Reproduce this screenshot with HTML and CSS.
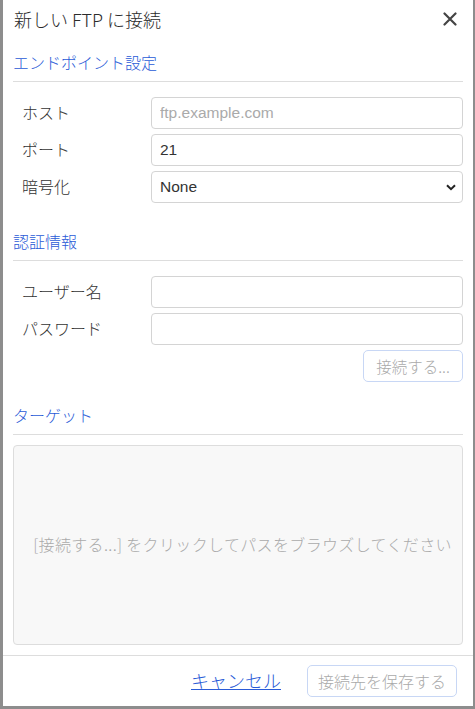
FILE: index.html
```html
<!DOCTYPE html>
<html lang="ja">
<head>
<meta charset="utf-8">
<link rel="stylesheet" href="styles.css">
</head>
<body>
<div class="dialog">
  <div class="header">
    <div class="title">新しい FTP に接続</div>
    <button class="close" aria-label="close">
      <svg width="14" height="14" viewBox="0 0 14 14"><path d="M1.5 1.5 L12.5 12.5 M12.5 1.5 L1.5 12.5" stroke="#444" stroke-width="2.2" stroke-linecap="round"/></svg>
    </button>
  </div>
  <div class="body">
    <div class="section-title">エンドポイント設定</div>
    <div class="rows">
      <div class="row"><label>ホスト</label><input class="field" placeholder="ftp.example.com"></div>
      <div class="row"><label>ポート</label><input class="field" value="21"></div>
      <div class="row"><label>暗号化</label>
        <div class="field select"><span>None</span>
          <svg width="10" height="7" viewBox="0 0 10 7"><path d="M1 1.2 L5 5.2 L9 1.2" fill="none" stroke="#222" stroke-width="2"/></svg>
        </div>
      </div>
    </div>
    <div class="section-title second">認証情報</div>
    <div class="rows">
      <div class="row"><label>ユーザー名</label><input class="field"></div>
      <div class="row"><label>パスワード</label><input class="field" type="password"></div>
      <div class="row right"><button class="btn" disabled>接続する...</button></div>
    </div>
    <div class="section-title third">ターゲット</div>
    <div class="target">[接続する...] をクリックしてパスをブラウズしてください</div>
  </div>
  <div class="footer">
    <a class="cancel" href="#">キャンセル</a>
    <button class="btn save" disabled>接続先を保存する</button>
  </div>
</div>
</body>
</html>
```
FILE: styles.css
```css
html, body {
  margin: 0;
  padding: 0;
}
body {
  background: #8d8d8d;
  height: 709px;
  overflow: hidden;
  font-family: "Liberation Sans", "Noto Sans CJK JP", sans-serif;
  font-weight: 300;
  color: #333;
}
.dialog {
  margin-left: 3px;
  width: 470px;
  height: 706px;
  background: #fff;
  display: flex;
  flex-direction: column;
}
.header {
  height: 38px;
  padding: 0 16px 0 11px;
  display: flex;
  align-items: center;
  justify-content: space-between;
}
.title {
  font-family: "Noto Sans CJK JP", sans-serif;
  font-size: 18px;
  line-height: 24px;
  color: #2b2b2b;
}
.close {
  border: 0;
  background: none;
  padding: 0;
  width: 14px;
  height: 14px;
  display: flex;
}
.body {
  padding: 0 10px;
  flex: 1;
}
.section-title {
  margin-top: 15px;
  font-size: 16px;
  line-height: 22px;
  color: #2a5bd7;
  padding-bottom: 6px;
  border-bottom: 1px solid #ddd;
}
.section-title.second {
  margin-top: 29px;
}
.section-title.third {
  margin-top: 24px;
}
.rows {
  margin-top: 15px;
  display: flex;
  flex-direction: column;
  gap: 5px;
}
.row {
  display: flex;
  align-items: center;
  height: 32px;
}
.row.right {
  justify-content: flex-end;
}
.row label {
  width: 129px;
  padding-left: 9px;
  padding-bottom: 3px;
  font-size: 16px;
  color: #333;
}
.field {
  box-sizing: border-box;
  flex: 1;
  height: 32px;
  border: 1px solid #d4d4d4;
  border-radius: 4px;
  padding: 0 8px;
  font-family: "Liberation Sans", "Noto Sans CJK JP", sans-serif;
  font-size: 15.5px;
  color: #333;
  background: #fff;
  outline: none;
}
.field::placeholder {
  color: #aaa;
}
.select {
  display: flex;
  align-items: center;
  justify-content: space-between;
  padding-right: 6px;
}
.btn {
  box-sizing: border-box;
  height: 32px;
  border: 1px solid #c8d7f5;
  border-radius: 5px;
  background: #fff;
  color: #aaa;
  font-family: "Noto Sans CJK JP", sans-serif;
  font-weight: 300;
  font-size: 16px;
  padding: 0 11px;
  line-height: 30px;
}
.row .btn {
  width: 100px;
  font-size: 15.5px;
  padding: 0;
}
.target {
  box-sizing: border-box;
  margin-top: 10px;
  height: 200px;
  background: #f8f8f8;
  border: 1px solid #ddd;
  border-radius: 4px;
  display: flex;
  align-items: center;
  justify-content: center;
  padding: 0 0 3px 9px;
  font-family: "Noto Sans CJK JP", sans-serif;
  font-size: 16px;
  letter-spacing: 0.35px;
  color: #aaa;
}
.footer {
  height: 50px;
  border-top: 1px solid #ddd;
  display: flex;
  align-items: center;
  justify-content: flex-end;
  padding-right: 16px;
  gap: 26px;
}
.cancel {
  font-family: "Noto Sans CJK JP", sans-serif;
  font-size: 18px;
  color: #2a5bd7;
  text-decoration: underline;
  padding-bottom: 3px;
}
.save {
  width: 150px;
  padding: 0;
}
```
